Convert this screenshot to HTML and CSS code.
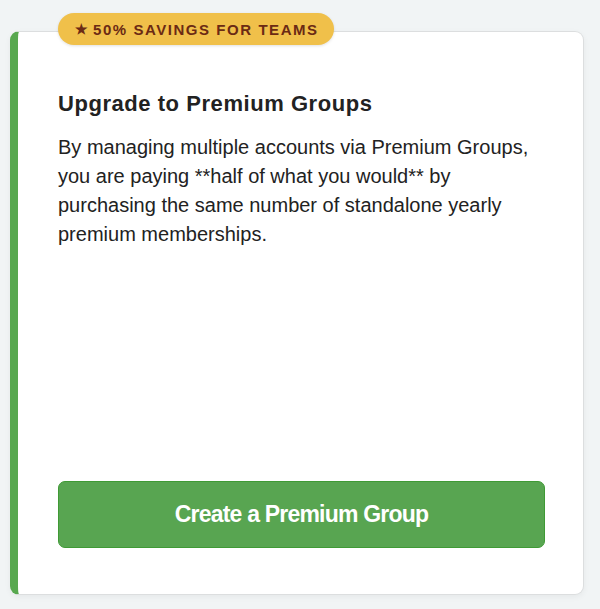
FILE: index.html
```html
<!DOCTYPE html>
<html>
<head>
<meta charset="utf-8">
<link rel="stylesheet" href="styles.css">
</head>
<body>
<div class="card">
  <span class="badge"><span class="star">★</span> 50% SAVINGS FOR TEAMS</span>
  <div class="content">
    <h2 class="title">Upgrade to Premium Groups</h2>
    <p class="desc">By managing multiple accounts via Premium Groups, you are paying **half of what you would** by purchasing the same number of standalone yearly premium memberships.</p>
  </div>
  <button class="cta">Create a Premium Group</button>
</div>
</body>
</html>
```
FILE: styles.css
```css
html, body {
  margin: 0;
  padding: 0;
  background: #f1f4f5;
}
body {
  padding: 31px 16px 14px 10px;
  font-family: "Liberation Sans", Arial, sans-serif;
  color: #222;
}
.card {
  position: relative;
  box-sizing: border-box;
  height: 564px;
  background: #fff;
  border: 1px solid #dcdedf;
  border-left: 8px solid #58a84f;
  border-radius: 9px;
  box-shadow: 0 2px 6px rgba(0, 0, 0, 0.05);
  padding: 58px 38px 46px 40px;
  display: flex;
  flex-direction: column;
}
.badge {
  position: absolute;
  top: -19px;
  left: 40px;
  height: 32px;
  box-sizing: border-box;
  padding: 0 15px 0 17px;
  display: flex;
  align-items: center;
  gap: 5px;
  background: #f0c04a;
  color: #6b2a14;
  border-radius: 16px;
  font-size: 15px;
  font-weight: 700;
  letter-spacing: 1.55px;
  box-shadow: 0 1px 3px rgba(0, 0, 0, 0.12);
}
.star {
  font-size: 14px;
  letter-spacing: 0;
}
.content {
  flex: 1;
}
.title {
  margin: 0 0 15px;
  font-size: 22px;
  line-height: 28px;
  font-weight: 700;
  letter-spacing: 0.55px;
  color: #222;
}
.desc {
  margin: 0;
  font-size: 20px;
  line-height: 29px;
  color: #222;
}
.cta {
  height: 67px;
  width: 100%;
  background: #58a551;
  color: #fff;
  border: 1px solid #3f9a35;
  border-radius: 7px;
  font-family: "Liberation Sans", Arial, sans-serif;
  font-size: 23px;
  font-weight: 700;
  letter-spacing: -0.8px;
  cursor: pointer;
}
```
